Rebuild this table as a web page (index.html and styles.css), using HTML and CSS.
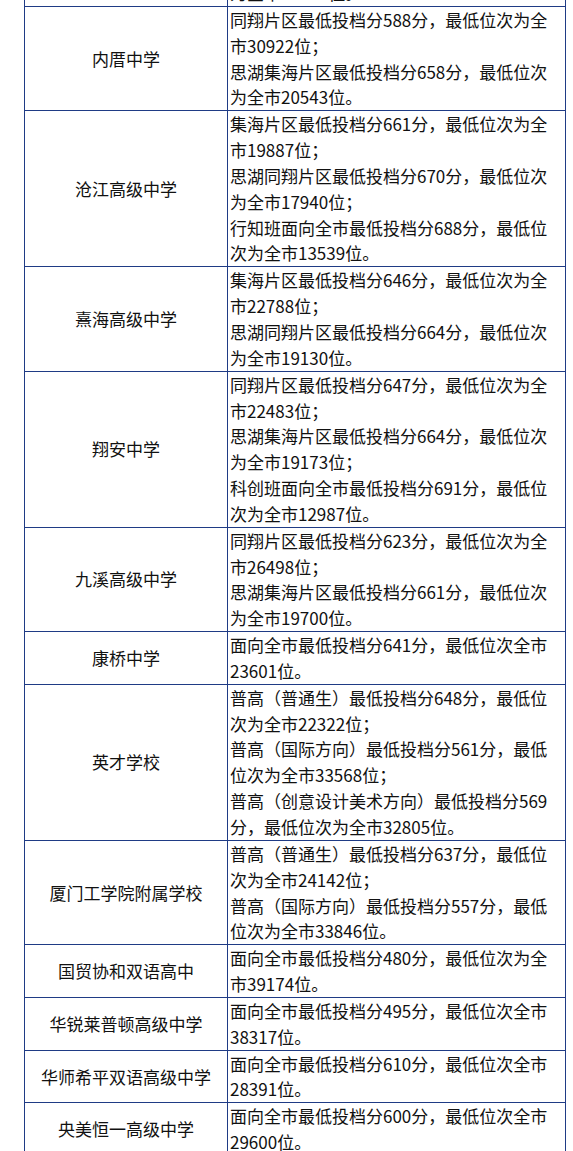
FILE: index.html
```html
<!DOCTYPE html>
<html lang="zh-CN">
<head>
<meta charset="utf-8">
<title>录取分数线</title>
<link rel="stylesheet" href="styles.css">
</head>
<body>
<table class="score-table">
  <colgroup><col class="col-name"><col class="col-info"></colgroup>
  <tbody>
    <tr>
      <td class="name"></td>
      <td class="info"><p>为全市20543位。</p></td>
    </tr>
    <tr>
      <td class="name">内厝中学</td>
      <td class="info"><p>同翔片区最低投档分588分，最低位次为全市30922位；</p><p>思湖集海片区最低投档分658分，最低位次为全市20543位。</p></td>
    </tr>
    <tr>
      <td class="name">沧江高级中学</td>
      <td class="info"><p>集海片区最低投档分661分，最低位次为全市19887位；</p><p>思湖同翔片区最低投档分670分，最低位次为全市17940位；</p><p>行知班面向全市最低投档分688分，最低位次为全市13539位。</p></td>
    </tr>
    <tr>
      <td class="name">熹海高级中学</td>
      <td class="info"><p>集海片区最低投档分646分，最低位次为全市22788位；</p><p>思湖同翔片区最低投档分664分，最低位次为全市19130位。</p></td>
    </tr>
    <tr>
      <td class="name">翔安中学</td>
      <td class="info"><p>同翔片区最低投档分647分，最低位次为全市22483位；</p><p>思湖集海片区最低投档分664分，最低位次为全市19173位；</p><p>科创班面向全市最低投档分691分，最低位次为全市12987位。</p></td>
    </tr>
    <tr>
      <td class="name">九溪高级中学</td>
      <td class="info"><p>同翔片区最低投档分623分，最低位次为全市26498位；</p><p>思湖集海片区最低投档分661分，最低位次为全市19700位。</p></td>
    </tr>
    <tr>
      <td class="name">康桥中学</td>
      <td class="info"><p>面向全市最低投档分641分，最低位次全市23601位。</p></td>
    </tr>
    <tr>
      <td class="name">英才学校</td>
      <td class="info"><p>普高（普通生）最低投档分648分，最低位次为全市22322位；</p><p>普高（国际方向）最低投档分561分，最低位次为全市33568位；</p><p>普高（创意设计美术方向）最低投档分569分，最低位次为全市32805位。</p></td>
    </tr>
    <tr>
      <td class="name">厦门工学院附属学校</td>
      <td class="info"><p>普高（普通生）最低投档分637分，最低位次为全市24142位；</p><p>普高（国际方向）最低投档分557分，最低位次为全市33846位。</p></td>
    </tr>
    <tr>
      <td class="name">国贸协和双语高中</td>
      <td class="info"><p>面向全市最低投档分480分，最低位次为全市39174位。</p></td>
    </tr>
    <tr>
      <td class="name">华锐莱普顿高级中学</td>
      <td class="info"><p>面向全市最低投档分495分，最低位次全市38317位。</p></td>
    </tr>
    <tr>
      <td class="name">华师希平双语高级中学</td>
      <td class="info"><p>面向全市最低投档分610分，最低位次全市28391位。</p></td>
    </tr>
    <tr>
      <td class="name">央美恒一高级中学</td>
      <td class="info"><p>面向全市最低投档分600分，最低位次全市29600位。</p></td>
    </tr>
  </tbody>
</table>
</body>
</html>
```

FILE: styles.css
```css
html, body {
  margin: 0;
  padding: 0;
  background: #ffffff;
}
body {
  overflow: hidden;
  font-family: "Noto Sans CJK SC", "Noto Sans", sans-serif;
  font-size: 17px;
  color: #111111;
}
.score-table {
  border-collapse: collapse;
  table-layout: fixed;
  width: 541px;
  margin: -21px 0 0 24px;
}
.col-name { width: 203px; }
.col-info { width: 338px; }
.score-table td {
  border: 1px solid #1f3b85;
  padding: 0;
  line-height: 25.84px;
}
.name {
  text-align: center;
  vertical-align: middle;
}
.info {
  text-align: left;
  vertical-align: top;
  padding: 0 6px 0 2px !important;
}
.info p {
  margin: 0;
}
```
